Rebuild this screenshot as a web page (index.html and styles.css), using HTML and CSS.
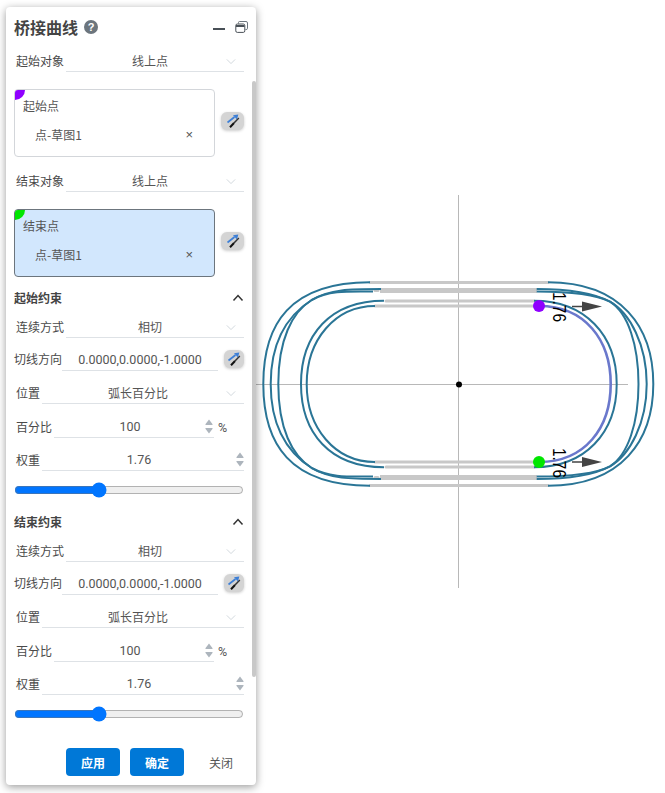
FILE: index.html
```html
<!DOCTYPE html>
<html lang="zh">
<head>
<meta charset="utf-8">
<title>桥接曲线</title>
<link rel="stylesheet" href="styles.css">
</head>
<body>
<svg class="defs" width="0" height="0" aria-hidden="true">
  <symbol id="chev" viewBox="0 0 12 8"><path d="M1 1.500 6 6.500 11 1.500" fill="none" stroke="#ced4da" stroke-width="1.100"/></symbol>
  <symbol id="up" viewBox="0 0 12 8"><path d="M1.500 6.500 6 1.500 10.500 6.500" fill="none" stroke="#333" stroke-width="1.500"/></symbol>
  <symbol id="wand" viewBox="0 0 16 16">
    <path d="M9 10 13.800 5" stroke="#333" stroke-width="1.500" fill="none"/>
    <path d="M5 14.300 9 10" stroke="#111" stroke-width="2" fill="none"/>
    <path d="M2.500 9.500 9.500 4" stroke="#3d7fd6" stroke-width="1.700" fill="none"/>
    <path d="M8 2.300 13.300 1.500 12 6.500Z" fill="#3d7fd6"/>
  </symbol>
  <symbol id="spin" viewBox="0 0 8 15"><path d="M4 .5 7.600 5.200Q7.900 6 7 6H1Q.1 6 .4 5.200ZM4 14.500 7.600 9.800Q7.900 9 7 9H1Q.1 9 .4 9.800Z" fill="#adb5bd"/></symbol>
  <g id="half">
    <path class="guide g3" d="M370 282.500H548"/>
    <path class="guide g5" d="M380 290.500H537"/>
    <path class="guide g3" d="M375 290.500H378"/>
    <path class="guide g3" d="M386 301H534"/>
    <path class="guide g3" d="M375 306H539"/>
    <path class="curve" d="M370 282.300C290 282.300 263.300 324 263.300 384"/>
    <path class="curve" d="M381 289C350 289 330 289 311.700 300C285 317 270.700 345 270.700 384"/>
    <path class="curve" d="M373 291.500C350 291.500 330 290 311.700 300C292 312 278.300 340 278.300 384"/>
    <path class="curve" d="M384 300.700C330 300.700 301 335 301 384"/>
    <path class="curve" d="M375 306C335 306 306.700 340 306.700 384"/>
    <path class="curve" d="M548 282.300C622 282.300 653.300 328 653.300 384"/>
    <path class="curve" d="M536.700 289C560 289 590 291 610 301.700C630 313 646.700 345 646.700 384"/>
    <path class="curve" d="M536.700 291.500C565 291.500 595 294 610 301.700C628 313 638.500 345 638.500 384"/>
    <path class="curve" d="M534 300.700C585 300.700 616.700 335 616.700 384"/>
    <path class="bridge" d="M539 306C585 306 610.700 340 610.700 384"/>
  </g>
</svg>

<svg class="stage" width="665" height="793" viewBox="0 0 665 793" aria-hidden="true">
  <g class="axis">
    <path d="M458.500 195V588"/>
    <path d="M255 384.500H628"/>
  </g>
  <use href="#half"/>
  <use href="#half" transform="matrix(1 0 0 -1 0 768)"/>
  <g class="arrow">
    <path class="shaft" d="M572 306.500H590M572 462H590"/>
    <path d="M582 301.500 602 306.500 582 311.500ZM582 457 602 462 582 467Z"/>
  </g>
  <circle class="origin" cx="459" cy="384.500" r="3"/>
  <circle class="p-start" cx="539" cy="306" r="6"/>
  <circle class="p-end" cx="539" cy="462" r="6"/>
  <text class="dim" transform="translate(553 292) rotate(90)" textLength="30" lengthAdjust="spacingAndGlyphs">1.76</text>
  <text class="dim" transform="translate(553 448) rotate(90)" textLength="30" lengthAdjust="spacingAndGlyphs">1.76</text>
</svg>

<main class="panel">
  <header class="head">
    <h1 class="title">桥接曲线</h1>
    <span class="help">?</span>
    <span class="spacer"></span>
    <span class="minimize"></span>
    <svg class="restore" width="13" height="12" viewBox="0 0 13 12"><path d="M3.500 2.500V1.500Q3.500 .5 4.500 .5H11Q12.500 .5 12.500 2V7.500Q12.500 8.500 11 8.500H10.500" fill="none" stroke="#6c757d"/><rect x=".8" y="3" width="9" height="8.400" rx="1.500" fill="#fff" stroke="#495057"/><path d="M1 5H9.500" stroke="#495057" stroke-width="2"/></svg>
  </header>

  <div class="row first"><label class="lab w50">起始对象</label><div class="field sel"><span class="val">线上点</span><svg class="chev"><use href="#chev"/></svg></div></div>

  <div class="pick gap17">
    <div class="card"><i class="mark mark-start"></i><div class="card-label">起始点</div><div class="card-item"><span>点-草图1</span><span class="x">×</span></div></div>
    <button class="wand wide"><svg width="16" height="16"><use href="#wand"/></svg></button>
  </div>

  <div class="row gap13"><label class="lab w50">结束对象</label><div class="field sel"><span class="val">线上点</span><svg class="chev"><use href="#chev"/></svg></div></div>

  <div class="pick gap17">
    <div class="card active"><i class="mark mark-end"></i><div class="card-label">结束点</div><div class="card-item"><span>点-草图1</span><span class="x">×</span></div></div>
    <button class="wand wide"><svg width="16" height="16"><use href="#wand"/></svg></button>
  </div>

  <section class="block gap11">
    <div class="sec"><h2 class="sec-title">起始约束</h2><svg class="up"><use href="#up"/></svg></div>
    <div class="row gap8"><label class="lab w50">连续方式</label><div class="field sel"><span class="val">相切</span><svg class="chev"><use href="#chev"/></svg></div></div>
    <div class="row gap11"><label class="lab tan">切线方向</label><div class="field tanf"><span class="num">0.0000,0.0000,-1.0000</span></div><button class="wand narrow"><svg width="16" height="16"><use href="#wand"/></svg></button></div>
    <div class="row gap11"><label class="lab w26">位置</label><div class="field sel"><span class="val">弧长百分比</span><svg class="chev"><use href="#chev"/></svg></div></div>
    <div class="row gap12"><label class="lab w38">百分比</label><div class="field num-field pct"><span class="val num">100</span><svg class="spin"><use href="#spin"/></svg></div><span class="unit">%</span></div>
    <div class="row gap11"><label class="lab w26">权重</label><div class="field num-field"><span class="val num">1.76</span><svg class="spin"><use href="#spin"/></svg></div></div>
    <input class="slider" type="range" min="0" max="100" step="0.1" value="36">
  </section>

  <section class="block gap14">
    <div class="sec"><h2 class="sec-title">结束约束</h2><svg class="up"><use href="#up"/></svg></div>
    <div class="row gap8"><label class="lab w50">连续方式</label><div class="field sel"><span class="val">相切</span><svg class="chev"><use href="#chev"/></svg></div></div>
    <div class="row gap11"><label class="lab tan">切线方向</label><div class="field tanf"><span class="num">0.0000,0.0000,-1.0000</span></div><button class="wand narrow"><svg width="16" height="16"><use href="#wand"/></svg></button></div>
    <div class="row gap11"><label class="lab w26">位置</label><div class="field sel"><span class="val">弧长百分比</span><svg class="chev"><use href="#chev"/></svg></div></div>
    <div class="row gap12"><label class="lab w38">百分比</label><div class="field num-field pct"><span class="val num">100</span><svg class="spin"><use href="#spin"/></svg></div><span class="unit">%</span></div>
    <div class="row gap11"><label class="lab w26">权重</label><div class="field num-field"><span class="val num">1.76</span><svg class="spin"><use href="#spin"/></svg></div></div>
    <input class="slider" type="range" min="0" max="100" step="0.1" value="36">
  </section>

  <footer class="foot">
    <button class="btn">应用</button>
    <button class="btn">确定</button>
    <button class="btn-link">关闭</button>
  </footer>
  <div class="scrollbar"></div>
</main>
</body>
</html>
```

FILE: styles.css
```css
* { box-sizing: border-box; }
html, body { margin: 0; padding: 0; height: 793px; overflow: hidden; background: #fff; }
body { font-family: "Noto Sans CJK SC", "Noto Sans", sans-serif; font-size: 12px; color: #555; }
.defs { position: absolute; }
.stage { position: absolute; left: 0; top: 0; }
.axis path { stroke: #b8b8b8; stroke-width: 1; fill: none; }
.guide { fill: none; stroke: #c8c8c8; stroke-linecap: round; }
.g3 { stroke-width: 3; }
.g5 { stroke-width: 5; stroke-linecap: butt; }
.curve { fill: none; stroke: #2a7596; stroke-width: 2; }
.bridge { fill: none; stroke: #6a78cc; stroke-width: 2.6; }
.arrow path { fill: #444; }
.arrow .shaft { stroke: #444; stroke-width: 1.5; fill: none; }
.origin { fill: #000; }
.p-start { fill: #8f00ff; }
.p-end { fill: #00e600; }
.dim { font-family: "Liberation Sans", sans-serif; font-size: 18px; fill: #000; }

.panel {
  position: absolute; left: 6px; top: 7px; width: 250px; height: 778px;
  background: #fff; border-radius: 4px; padding: 0 12px 9px 8px;
  box-shadow: 0 2px 8px rgba(0, 0, 0, .4);
}
.head { display: flex; align-items: center; height: 40px; }
.title { margin: 0; font-size: 16px; font-weight: 700; color: #444; line-height: 24px; }
.help {
  width: 14px; height: 14px; margin-left: 6px; border-radius: 50%; background: #6c757d; color: #fff;
  font: 700 11px/14px "Liberation Sans", sans-serif; text-align: center;
}
.spacer { flex: 1; }
.minimize { width: 12px; height: 2px; margin: 4px 0 0 0; background: #495057; }
.restore { margin: 0 -4px 0 10px; }

.row { display: flex; align-items: center; height: 22px; }
.first { margin-top: 3px; }
.gap8 { margin-top: 8px; }
.gap11 { margin-top: 11px; }
.gap12 { margin-top: 12px; }
.gap13 { margin-top: 13px; }
.gap14 { margin-top: 14px; }
.gap17 { margin-top: 17px; }
.lab { flex: none; padding-left: 2px; color: #4a4a4a; line-height: 22px; }
.w50 { width: 52px; }
.w26 { width: 28px; }
.w38 { width: 40px; }
.tan { width: 48px; padding-left: 0; margin-top: -2px; }
.field { position: relative; display: flex; align-items: center; justify-content: center; height: 22px; border-bottom: 1px solid #dee2e6; flex: 1; min-width: 0; color: #555; }
.sel { padding-right: 10px; }
.num-field { padding-right: 8px; }
.pct { flex: none; width: 160px; }
.tanf { flex: none; width: 156px; }
.num { font-family: Roboto, "Noto Sans", sans-serif; font-size: 12.5px; }
.unit { margin-left: 4px; font-family: Roboto, sans-serif; font-size: 12.5px; color: #555; }
.chev { position: absolute; right: 8px; top: 8px; width: 10px; height: 7px; }
.spin { position: absolute; right: 0; top: 3px; width: 8px; height: 15px; }
.pct .spin { right: 1px; }

.pick { display: flex; align-items: center; justify-content: space-between; }
.card { position: relative; width: 201px; height: 68px; border: 1px solid #d3d6da; border-radius: 4px; overflow: hidden; background: #fff; }
.card.active { background: #d2e7fd; border-color: #6c757d; }
.mark { position: absolute; left: 0; top: 0; width: 10px; height: 10px; border-bottom-right-radius: 10px; }
.mark-start { background: #8f00ff; }
.mark-end { background: #00e600; }
.card-label { position: absolute; left: 8px; top: 7px; line-height: 18px; color: #555; }
.card-item { position: absolute; left: 20px; right: 21px; top: 36px; display: flex; justify-content: space-between; line-height: 18px; color: #555; }
.x { font-family: "Liberation Sans", sans-serif; font-size: 13px; }

.wand {
  display: flex; align-items: center; justify-content: center; padding: 0; border: 0; border-radius: 6px;
  height: 18px; background: #d4d4d4; box-shadow: 0 1px 3px rgba(0, 0, 0, .2);
}
.wide { width: 23px; margin-top: -4px; }
.narrow { width: 20px; margin: -2px 0 0 6px; flex: none; }

.sec { display: flex; align-items: center; justify-content: space-between; height: 20px; }
.sec-title { margin: 0 0 2px; font-size: 12px; font-weight: 700; color: #444; }
.up { width: 12px; height: 8px; }
.slider { display: block; width: 230px; height: 16px; margin: 11px 0 0; accent-color: #0075ff; }

.foot { display: flex; align-items: center; margin: 26px 0 0 52px; }
.btn { width: 54px; height: 28px; margin-right: 10px; padding: 0; border: 0; border-radius: 4px; background: #0078d7; color: #fff; font: 700 12px "Noto Sans CJK SC", sans-serif; }
.btn-link { width: 44px; height: 28px; padding: 0; margin-left: 5px; border: 0; background: none; color: #555; font: 12px "Noto Sans CJK SC", sans-serif; }
.scrollbar { position: absolute; left: 246px; top: 74px; width: 4px; height: 596px; background: #c8c8c8; border-radius: 2px; }
```
